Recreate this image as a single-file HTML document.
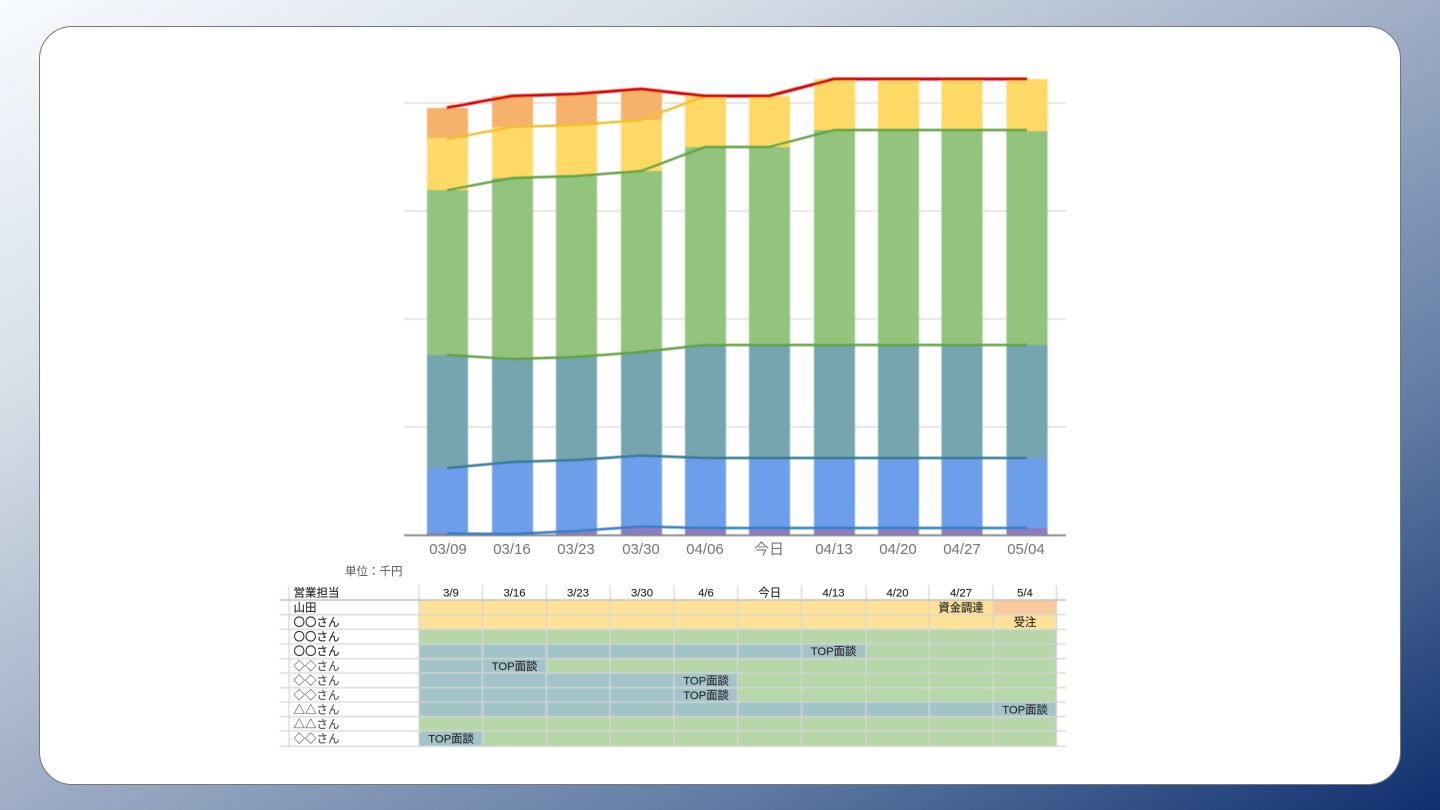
<!DOCTYPE html>
<html lang="ja">
<head>
<meta charset="utf-8">
<title>営業担当チャート</title>
<style>
html,body{margin:0;padding:0;width:1440px;height:810px;overflow:hidden}
body{position:relative;background:linear-gradient(to bottom right,#f8fbff 0%,#d6dee7 25%,#9eadc5 50%,#5f7ba3 75%,#0f2f6e 100%)}
#card{position:absolute;left:39px;top:26px;width:1360px;height:757px;background:#fff;border:1px solid #777;border-radius:33px}
svg{position:absolute;left:0;top:0}
text{font-family:"Liberation Sans","Noto Sans CJK JP",sans-serif}
</style>
</head>
<body>
<div id="card"></div>
<svg width="1440" height="810" viewBox="0 0 1440 810" xmlns="http://www.w3.org/2000/svg">
<defs>
<filter id="b" x="-2%" y="-2%" width="104%" height="104%"><feGaussianBlur stdDeviation="0.45"/></filter>
<filter id="t" x="-2%" y="-2%" width="104%" height="104%"><feGaussianBlur stdDeviation="0.35"/></filter>
</defs>
<g filter="url(#b)">
<g stroke="#dedede" stroke-width="1.6">
<path d="M404 103H1066M404 211H1066M404 319H1066M404 427H1066"/>
</g>
<g>
<rect x="427" y="108" width="41" height="30" fill="#f6b26b"/><rect x="427" y="138" width="41" height="52" fill="#ffd966"/><rect x="427" y="190" width="41" height="165" fill="#93c47d"/><rect x="427" y="355" width="41" height="113" fill="#76a5af"/><rect x="427" y="468" width="41" height="65" fill="#6d9eeb"/><rect x="427" y="533" width="41" height="2" fill="#8e7cc3"/>
<rect x="492" y="96" width="41" height="31" fill="#f6b26b"/><rect x="492" y="127" width="41" height="51" fill="#ffd966"/><rect x="492" y="178" width="41" height="181" fill="#93c47d"/><rect x="492" y="359" width="41" height="103" fill="#76a5af"/><rect x="492" y="462" width="41" height="72" fill="#6d9eeb"/><rect x="492" y="534" width="41" height="1" fill="#8e7cc3"/>
<rect x="556" y="94" width="41" height="31" fill="#f6b26b"/><rect x="556" y="125" width="41" height="51" fill="#ffd966"/><rect x="556" y="176" width="41" height="181" fill="#93c47d"/><rect x="556" y="357" width="41" height="103" fill="#76a5af"/><rect x="556" y="460" width="41" height="71" fill="#6d9eeb"/><rect x="556" y="531" width="41" height="4" fill="#8e7cc3"/>
<rect x="621" y="89" width="41" height="31" fill="#f6b26b"/><rect x="621" y="120" width="41" height="51" fill="#ffd966"/><rect x="621" y="171" width="41" height="181" fill="#93c47d"/><rect x="621" y="352" width="41" height="104" fill="#76a5af"/><rect x="621" y="456" width="41" height="70" fill="#6d9eeb"/><rect x="621" y="526" width="41" height="9" fill="#8e7cc3"/>
<rect x="685" y="96" width="41" height="51" fill="#ffd966"/><rect x="685" y="147" width="41" height="198" fill="#93c47d"/><rect x="685" y="345" width="41" height="113" fill="#76a5af"/><rect x="685" y="458" width="41" height="70" fill="#6d9eeb"/><rect x="685" y="528" width="41" height="7" fill="#8e7cc3"/>
<rect x="749" y="96" width="41" height="51" fill="#ffd966"/><rect x="749" y="147" width="41" height="198" fill="#93c47d"/><rect x="749" y="345" width="41" height="113" fill="#76a5af"/><rect x="749" y="458" width="41" height="70" fill="#6d9eeb"/><rect x="749" y="528" width="41" height="7" fill="#8e7cc3"/>
<rect x="814" y="79" width="41" height="51" fill="#ffd966"/><rect x="814" y="130" width="41" height="215" fill="#93c47d"/><rect x="814" y="345" width="41" height="113" fill="#76a5af"/><rect x="814" y="458" width="41" height="70" fill="#6d9eeb"/><rect x="814" y="528" width="41" height="7" fill="#8e7cc3"/>
<rect x="878" y="79" width="41" height="51" fill="#ffd966"/><rect x="878" y="130" width="41" height="215" fill="#93c47d"/><rect x="878" y="345" width="41" height="113" fill="#76a5af"/><rect x="878" y="458" width="41" height="70" fill="#6d9eeb"/><rect x="878" y="528" width="41" height="7" fill="#8e7cc3"/>
<rect x="941.500" y="79" width="41" height="51" fill="#ffd966"/><rect x="941.500" y="130" width="41" height="215" fill="#93c47d"/><rect x="941.500" y="345" width="41" height="113" fill="#76a5af"/><rect x="941.500" y="458" width="41" height="70" fill="#6d9eeb"/><rect x="941.500" y="528" width="41" height="7" fill="#8e7cc3"/>
<rect x="1006.500" y="79" width="41" height="52" fill="#ffd966"/><rect x="1006.500" y="131" width="41" height="214" fill="#93c47d"/><rect x="1006.500" y="345" width="41" height="113" fill="#76a5af"/><rect x="1006.500" y="458" width="41" height="70" fill="#6d9eeb"/><rect x="1006.500" y="528" width="41" height="7" fill="#8e7cc3"/>
</g>
<path d="M404 535.300H1066" stroke="#858585" stroke-width="1.800"/>
<g fill="none" stroke-width="2.400" stroke-linejoin="round" stroke-linecap="round">
<polyline stroke="#2f7fc4" points="448,533.500 512,534 576,531 641,526.500 705,528 769,528 834,528 898,528 962,528 1026,528"/>
<polyline stroke="#357a92" points="448,468 512,462 576,460 641,455.500 705,458 769,458 834,458 898,458 962,458 1026,458"/>
<polyline stroke="#5ea340" points="448,355 512,359 576,357 641,352 705,345 769,345 834,345 898,345 962,345 1026,345"/>
<polyline stroke="#5ea340" points="448,190 512,178 576,176 641,171 705,147 769,147 834,130 898,130 962,130 1026,130"/>
<polyline stroke="#f1bf25" points="448,139 512,127 576,125 641,120 705,96"/>
<polyline stroke="#d80000" stroke-width="3" points="448,107.500 512,96 576,94 641,89 705,96 769,96 834,79 898,79 962,79 1026,79"/>
</g>
<rect x="419" y="600" width="574" height="14.700" fill="#fee299"/><rect x="993" y="600" width="63.500" height="14.700" fill="#f9cb9c"/>
<rect x="419" y="614.700" width="637.500" height="14.600" fill="#fee299"/>
<rect x="419" y="629.300" width="637.500" height="14.700" fill="#b6d7a8"/>
<rect x="419" y="644" width="447" height="14.700" fill="#a2c4c9"/><rect x="866" y="644" width="190.500" height="14.700" fill="#b6d7a8"/>
<rect x="419" y="658.700" width="127.500" height="14.300" fill="#a2c4c9"/><rect x="546.500" y="658.700" width="510" height="14.300" fill="#b6d7a8"/>
<rect x="419" y="673" width="319" height="14.700" fill="#a2c4c9"/><rect x="738" y="673" width="318.500" height="14.700" fill="#b6d7a8"/>
<rect x="419" y="687.700" width="319" height="14.300" fill="#a2c4c9"/><rect x="738" y="687.700" width="318.500" height="14.300" fill="#b6d7a8"/>
<rect x="419" y="702" width="637.500" height="14.700" fill="#a2c4c9"/>
<rect x="419" y="716.700" width="637.500" height="14.300" fill="#b6d7a8"/>
<rect x="419" y="731" width="63.500" height="15" fill="#a2c4c9"/><rect x="482.500" y="731" width="574" height="15" fill="#b6d7a8"/>
<g stroke="#d6d6d6" stroke-width="1.300">
<path d="M280 614.700H1066M280 629.300H1066M280 644H1066M280 658.700H1066M280 673H1066M280 687.700H1066M280 702H1066M280 716.700H1066M280 731H1066M280 746.300H1066"/>
<path d="M289 585V746M419 585V746M482.500 585V746M546.500 585V746M610 585V746M674 585V746M737.700 585V746M801.500 585V746M866 585V746M929 585V746M993 585V746M1056.500 585V746"/>
</g>
<path d="M280 600H1066" stroke="#bdbdbd" stroke-width="1.500"/>
</g>
<g filter="url(#t)">
<g font-size="15" fill="#757575" text-anchor="middle">
<text x="448" y="554">03/09</text><text x="512" y="554">03/16</text><text x="576" y="554">03/23</text><text x="641" y="554">03/30</text><text x="705" y="554">04/06</text><text x="769" y="554">今日</text><text x="834" y="554">04/13</text><text x="898" y="554">04/20</text><text x="962" y="554">04/27</text><text x="1026" y="554">05/04</text>
</g>
<text x="345" y="575" font-size="11.500" fill="#595959">単位：千円</text>
<g font-size="11.500" fill="#2b2b2b" stroke="#2b2b2b" stroke-width="0.15">
<text x="293.500" y="596.500">営業担当</text>
<text x="293.500" y="611.500">山田</text>
<text x="293.500" y="626">〇〇さん</text>
<text x="293.500" y="640.500">〇〇さん</text>
<text x="293.500" y="655">〇〇さん</text>
<text x="293.500" y="670" fill="#555" stroke="#555">◇◇さん</text>
<text x="293.500" y="684.500" fill="#555" stroke="#555">◇◇さん</text>
<text x="293.500" y="699" fill="#555" stroke="#555">◇◇さん</text>
<text x="293.500" y="713.500" fill="#555" stroke="#555">△△さん</text>
<text x="293.500" y="728" fill="#555" stroke="#555">△△さん</text>
<text x="293.500" y="742.500" fill="#555" stroke="#555">◇◇さん</text>
</g>
<g font-size="11.300" fill="#2b2b2b" stroke="#2b2b2b" stroke-width="0.15" text-anchor="middle">
<text x="451" y="596.500">3/9</text><text x="514.500" y="596.500">3/16</text><text x="578" y="596.500">3/23</text><text x="642" y="596.500">3/30</text><text x="706" y="596.500">4/6</text><text x="769.700" y="596.500">今日</text><text x="833.500" y="596.500">4/13</text><text x="897.500" y="596.500">4/20</text><text x="961" y="596.500">4/27</text><text x="1025" y="596.500">5/4</text>
<text x="961" y="611.500">資金調達</text>
<text x="1025" y="626">受注</text>
<text x="833.500" y="655">TOP面談</text>
<text x="514.500" y="670">TOP面談</text>
<text x="706" y="684.500">TOP面談</text>
<text x="706" y="699">TOP面談</text>
<text x="1025" y="713.500">TOP面談</text>
<text x="451" y="742.500">TOP面談</text>
</g>
</g>
</svg>
</body>
</html>
